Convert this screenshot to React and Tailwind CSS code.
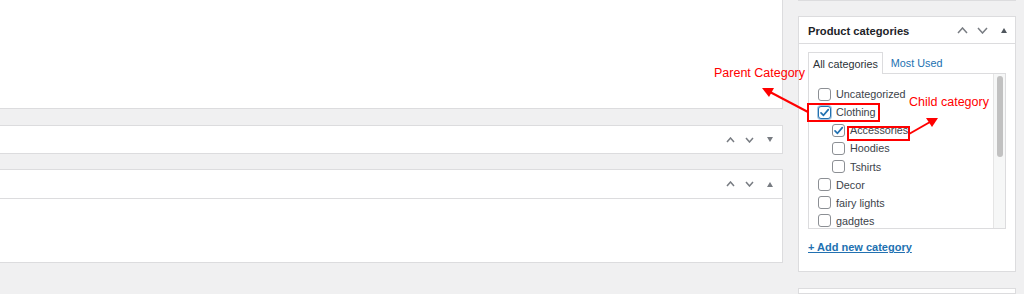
import React from 'react'

const font = { fontFamily: '"Liberation Sans", Arial, sans-serif' }

function Chevron({ up, w = 10, h = 6, color = '#787c82' }) {
  return (
    <svg width={w} height={h} viewBox={`0 0 ${w} ${h}`} fill="none">
      <path
        d={up ? `M1 ${h - 1} L${w / 2} 1 L${w - 1} ${h - 1}` : `M1 1 L${w / 2} ${h - 1} L${w - 1} 1`}
        stroke={color}
        strokeWidth="1.5"
      />
    </svg>
  )
}

function Tri({ up, size = 6, color = '#787c82' }) {
  return (
    <svg width={size} height={size - 1} viewBox="0 0 6 5">
      <path d={up ? 'M0 5 L3 0 L6 5 Z' : 'M0 0 L6 0 L3 5 Z'} fill={color} />
    </svg>
  )
}

function PanelControls({ up }) {
  return (
    <div className="flex items-center gap-[10px] pr-[9px]">
      <Chevron up w={9} h={6} />
      <Chevron w={9} h={6} />
      <span className="ml-[3px]"><Tri up={up} size={6} /></span>
    </div>
  )
}

function Checkbox({ checked, focus }) {
  return (
    <span
      className={
        'w-[13px] h-[13px] rounded-[3px] bg-white border flex items-center justify-center shrink-0 ' +
        (focus ? 'border-[#2271b1] ring-1 ring-[#2271b1]/40' : 'border-[#8c8f94]')
      }
    >
      {checked && (
        <svg width="11" height="11" viewBox="0 0 11 11" fill="none">
          <path d="M2 5.8 L4.5 8.3 L9.3 2.6" stroke="#2271b1" strokeWidth="1.7" strokeLinecap="round" strokeLinejoin="round" />
        </svg>
      )}
    </span>
  )
}

const categories = [
  { name: 'Uncategorized' },
  { name: 'Clothing', checked: true, focus: true },
  { name: 'Accessories', checked: true, child: true },
  { name: 'Hoodies', child: true },
  { name: 'Tshirts', child: true },
  { name: 'Decor' },
  { name: 'fairy lights' },
  { name: 'gadgtes' },
]

export default function App() {
  return (
    <div className="relative w-[1024px] h-[294px] overflow-hidden bg-[#f0f0f1] flex" style={font}>
      {/* Main column */}
      <div className="w-[783px] shrink-0 flex flex-col">
        <div className="h-[109px] bg-white border-r border-b border-[#dcdcde]" />

        <div className="mt-[16px] h-[29px] bg-white border border-l-0 border-[#dcdcde] flex items-center justify-end">
          <PanelControls />
        </div>

        <div className="mt-[15px] bg-white border border-l-0 border-[#dcdcde]">
          <div className="h-[29px] flex items-center justify-end border-b border-[#dcdcde]">
            <PanelControls up />
          </div>
          <div className="h-[63px]" />
        </div>
      </div>

      {/* Sidebar */}
      <div className="ml-[15px] w-[218px] shrink-0 flex flex-col">
        <div className="h-[2px] bg-white border-x border-b border-[#dcdcde]" />

        <div className="mt-[15px] bg-white border border-[#dcdcde]">
          <div className="h-[27px] flex items-center justify-between border-b border-[#dcdcde] pl-[9px] pr-[8px]">
            <h2 className="text-[11.2px] font-bold text-[#1d2327] pt-[2px]">Product categories</h2>
            <div className="flex items-center gap-[9px]">
              <Chevron up w={11} h={7} />
              <Chevron w={11} h={7} />
              <span className="ml-[4px]"><Tri up size={6} color="#50575e" /></span>
            </div>
          </div>

          <div className="pl-[9px] pr-[9px] pt-[8px] pb-[15px]">
            <div className="flex items-end text-[10.8px]">
              <div className="h-[22px] px-[4px] flex items-center border border-b-0 border-[#dcdcde] bg-white text-[#2c3338] relative z-10 -mb-px">
                All categories
              </div>
              <div className="h-[21px] px-[8px] flex items-center text-[#2271b1]">Most Used</div>
            </div>
            <div className="h-[156px] border border-[#dcdcde] bg-white flex overflow-hidden">
              <ul className="flex-1 pt-[11px] pl-[9px] text-[10.8px] text-[#3c434a]">
                {categories.map((c) => (
                  <li key={c.name} className={'h-[18.1px] flex items-center gap-[5px] ' + (c.child ? 'pl-[14px]' : '')}>
                    <Checkbox checked={c.checked} focus={c.focus} />
                    <span>{c.name}</span>
                  </li>
                ))}
              </ul>
              <div className="w-[12px] border-l border-[#e5e5e5] bg-[#f6f7f7] pt-[2px] flex justify-center">
                <div className="w-[6px] h-[81px] rounded-full bg-[#c1c1c1]" />
              </div>
            </div>
            <a className="block mt-[10px] text-[11px] font-semibold text-[#2271b1] underline">+ Add new category</a>
          </div>
        </div>

        <div className="mt-[16px] h-[20px] bg-white border border-[#dcdcde]" />
      </div>

      {/* Annotations */}
      <div className="absolute left-[714px] top-[67px] text-[12.5px] text-[#ff0000] leading-none">Parent Category</div>
      <div className="absolute left-[909px] top-[96px] text-[12.5px] text-[#ff0000] leading-none">Child category</div>
      <div className="absolute left-[807px] top-[103px] w-[73px] h-[19px] border-2 border-[#ff0000]" />
      <div className="absolute left-[847px] top-[126px] w-[63px] h-[15px] border-2 border-[#ff0000]" />
      <svg className="absolute inset-0 pointer-events-none" width="1024" height="294">
        <line x1="808" y1="112" x2="770" y2="92" stroke="#ff0000" strokeWidth="2" />
        <path d="M762 88 L774 88 L769 97 Z" fill="#ff0000" />
        <line x1="909" y1="134" x2="930" y2="122" stroke="#ff0000" strokeWidth="2" />
        <path d="M938 118 L926 118 L932 127 Z" fill="#ff0000" />
      </svg>
    </div>
  )
}
